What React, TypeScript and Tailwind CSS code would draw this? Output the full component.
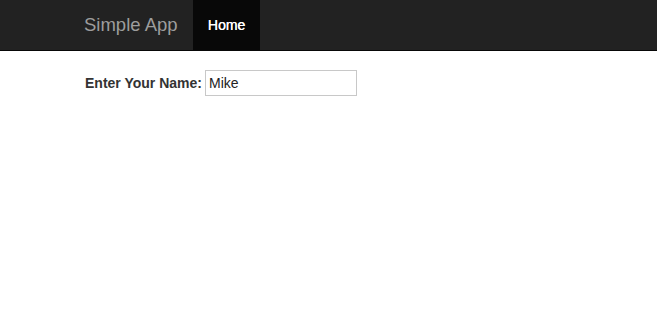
export default function App() {
  return (
    <div className="min-h-[327px] bg-white" style={{ fontFamily: '"Liberation Sans", Arial, sans-serif' }}>
      <nav className="flex h-[51px] border-b border-[#080808] bg-[#222222] pl-[69px]">
        <div className="flex h-[50px] w-[124px] items-center px-[15px] text-[18.5px] text-[#9d9d9d]">Simple App</div>
        <div className="flex h-[50px] w-[67px] items-center justify-center bg-[#080808] text-[14px] text-white [text-shadow:0.3px_0_0_#fff]">Home</div>
      </nav>
      <div className="flex items-center pl-[85px] pt-[19px]">
        <label className="text-[14px] font-bold text-[#333333]">Enter Your Name:</label>
        <input
          defaultValue="Mike"
          className="ml-[3px] h-[26px] w-[152px] border border-[#c8c8c8] px-[3px] text-[14px] text-[#222] outline-none"
          style={{ fontFamily: '"Liberation Sans", Arial, sans-serif' }}
        />
      </div>
    </div>
  );
}
